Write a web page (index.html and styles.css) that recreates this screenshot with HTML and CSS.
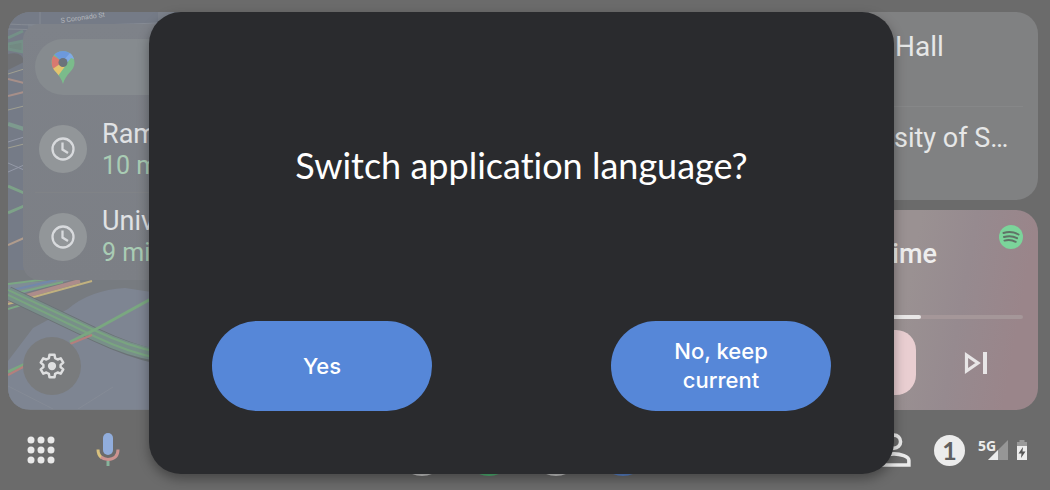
FILE: index.html
```html
<!DOCTYPE html>
<html lang="en">
<head>
<meta charset="utf-8">
<title>Switch application language</title>
<link rel="stylesheet" href="styles.css">
</head>
<body>
<div class="screen">
  <main class="cards">
    <section class="map-card">
      <svg class="map-art" viewBox="0 0 150 397" fill="none" aria-hidden="true">
        <path d="M0 0H150V12H20V270H0Z" fill="#757b87"/>
        <path d="M0 258H150V397H0Z" fill="#777b80"/>
        <path d="M25 316L60 297Q82 278 117 276L150 281V397H0V349Z" fill="#7e8592"/>
        <path d="M0 12Q50 15 150 11M0 17L150 21M32 0V12" stroke="#868b94" stroke-width="1"/>
        <path d="M0 26L15 19M0 32L15 29V40L0 37Z" stroke="#749087" fill="#728982" stroke-width="3"/>
        <path d="M0 42Q15 39 16 50L0 58Z" fill="#6f7175"/>
        <path d="M0 62L16 57M0 98L16 94M0 136L16 132" stroke="#a1a091"/>
        <path d="M0 67L16 71M0 84L16 80" stroke="#a68f89" stroke-width="2"/>
        <path d="M0 112L16 117" stroke="#7d9a8e" stroke-width="4"/>
        <path d="M0 130L16 125M0 160L16 153M0 151L16 158" stroke="#9499a7" stroke-width="1"/>
        <path d="M0 174L16 181M0 201L16 194" stroke="#7da288" stroke-width="3"/>
        <path d="M0 233L16 226" stroke="#b09c8d" stroke-width="2"/>
        <path d="M0 272L70 266L20 280L0 287Z" fill="#7f8c96"/>
        <path d="M0 272L40 267M0 283L55 270M0 297L20 291" stroke="#7ba783" stroke-width="2"/>
        <path d="M0 279L48 268" stroke="#7288aa" stroke-width="2"/>
        <path d="M0 289L72 269" stroke="#ac8c8b" stroke-width="4"/>
        <path d="M0 292L84 269" stroke="#c1b17f" stroke-width="2"/>
        <path d="M0 281L88 323Q122 339 150 345" stroke="#6b7276" stroke-width="14"/>
        <path d="M0 281L88 323Q122 339 150 343" stroke="#788f89" stroke-width="12"/>
        <path d="M0 278L88 319Q122 335 150 340M0 283L88 325Q122 341 150 346" stroke="#79a480" stroke-width="2"/>
        <path d="M62 330L92 315L150 283M0 360L17 352" stroke="#7aa780" stroke-width="3"/>
        <path d="M62 332L84 323M0 363L17 354" stroke="#b47f7c" stroke-width="2"/>
        <path d="M0 374L45 397M70 397L105 375" stroke="#858b96"/>
        <text class="street" x="53" y="11" transform="rotate(-8 53 11)">S Coronado St</text>
      </svg>
      <div class="places">
        <div class="search">
          <svg width="24" height="33" viewBox="0 0 24 33" aria-label="Maps">
            <defs><clipPath id="pin"><path d="M12 0C5 0 .5 5 .5 11.500C.5 20 9 22 12 33C15 22 23.500 20 23.500 11.500C23.500 5 19 0 12 0Z"/></clipPath></defs>
            <g clip-path="url(#pin)">
              <path d="M0 0H24V33H0Z" fill="#7bbb8b"/>
              <path d="M0 3L12 11L1 22Z" fill="#d87970"/>
              <path d="M12 11L15 14L7 25L0 19Z" fill="#e3c36e"/>
              <path d="M3 3Q11 -5 21 2L12 12Z" fill="#6d99dc"/>
              <path d="M19 2L25 4V9L20 7L15 13L12 10Z" fill="#80a9e5"/>
            </g>
            <circle cx="12" cy="11.500" r="4.500" fill="#6b737b"/>
          </svg>
        </div>
        <div class="place">
          <span class="clock"><svg width="26" height="26" viewBox="0 0 26 26" fill="none" stroke="#d8dadd" stroke-width="2.300"><circle cx="13" cy="13" r="10.500"/><path d="M12.500 6.500V13.500L18 17"/></svg></span>
          <div><p>Ram</p><p class="eta">10 m</p></div>
        </div>
        <div class="place">
          <span class="clock"><svg width="26" height="26" viewBox="0 0 26 26" fill="none" stroke="#d8dadd" stroke-width="2.300"><circle cx="13" cy="13" r="10.500"/><path d="M12.500 6.500V13.500L18 17"/></svg></span>
          <div><p>Univ</p><p class="eta">9 mi</p></div>
        </div>
      </div>
      <button class="settings" aria-label="Settings">
        <svg width="30" height="30" viewBox="0 0 24 24"><path d="M10 3h4l.5 2.700 2 1.100 2.500-.9 2 3.400-2.100 1.800v1.800l2.100 1.800-2 3.400-2.500-.9-2 1.100L14 21h-4l-.5-2.700-2-1.100-2.500.9-2-3.400 2.100-1.800v-1.800L3 9.300l2-3.400 2.500.9 2-1.100Z" fill="none" stroke="#dedfe0" stroke-width="2" stroke-linejoin="round"/><circle cx="12" cy="12" r="3.300" fill="#dedfe0"/></svg>
      </button>
    </section>
    <div class="side">
      <section class="list-card">
        <p class="entry">Hall</p>
        <p class="entry">sity of S…</p>
      </section>
      <section class="media-card">
        <div class="track">
          <h2>ime</h2>
          <svg width="24" height="24" viewBox="0 0 24 24" aria-label="Spotify"><circle cx="12" cy="12" r="12" fill="#7bd49a"/><path d="M4.500 8Q12.500 5.500 19.500 9.500M5 12Q12 9.800 18 13.200M5.500 15.600Q11.500 14 16.700 16.800" fill="none" stroke="#607267" stroke-width="2" stroke-linecap="round"/></svg>
        </div>
        <div class="progress"><div class="played"></div></div>
        <div class="controls">
          <button class="play" aria-label="Pause"></button>
          <button class="next" aria-label="Next"><svg width="24" height="24" viewBox="0 0 24 24"><path d="M2.500 4L14 12L2.500 20Z" fill="none" stroke="#e8e6e7" stroke-width="3.200"/><path d="M19 1H23V23H19Z" fill="#e8e6e7"/></svg></button>
        </div>
      </section>
    </div>
  </main>
  <nav class="dock">
    <button aria-label="Apps"><svg width="28" height="28" viewBox="0 0 28 28" fill="#e9e9e9"><circle cx="4" cy="4" r="3.500"/><circle cx="14" cy="4" r="3.500"/><circle cx="24" cy="4" r="3.500"/><circle cx="4" cy="14" r="3.500"/><circle cx="14" cy="14" r="3.500"/><circle cx="24" cy="14" r="3.500"/><circle cx="4" cy="24" r="3.500"/><circle cx="14" cy="24" r="3.500"/><circle cx="24" cy="24" r="3.500"/></svg></button>
    <button aria-label="Assistant"><svg width="24" height="34" viewBox="0 0 24 34" fill="none"><rect x="7" y="0" width="10" height="22" rx="5" fill="#91addc"/><path d="M2 16.500Q2 22 5.500 24.500" stroke="#d9c17e" stroke-width="3"/><path d="M5 24Q8 26.500 12 26.500Q22 26 22 16.500" stroke="#cc9390" stroke-width="3"/><path d="M12 28V33" stroke="#87b39b" stroke-width="3"/></svg></button>
    <div class="apps">
      <span class="app"></span><span class="app green"></span><span class="app"></span><span class="app blue"></span>
    </div>
    <div class="status">
      <svg width="50" height="50" viewBox="0 0 24 24" fill="none" stroke="#ececec" stroke-width="1.700"><circle cx="12" cy="8" r="3.150"/><path d="M4.850 19.150V17C4.850 15 9 13.850 12 13.850S19.150 15 19.150 17V19.150Z"/></svg>
      <span class="count">1</span>
      <div class="network">
        <span>5G</span>
        <svg width="20" height="20" viewBox="0 0 20 20"><path d="M20 0V20H0L10 10Z" fill="#969696"/><path d="M10 10V20H0Z" fill="#ececec"/></svg>
      </div>
      <svg class="battery" width="12" height="20" viewBox="0 0 12 20"><path d="M3.500 0H8.500V2H11V6H1V2H3.500Z" fill="#999"/><path d="M1 6H11V20H1Z" fill="#ececec"/><path d="M7 7L2.500 13.500H5.500L5 18L9.500 11.500H6.500Z" fill="#555"/></svg>
    </div>
  </nav>
  <div class="overlay">
    <div class="dialog" role="dialog" aria-labelledby="question">
      <h1 id="question">Switch application language?</h1>
      <div class="actions">
        <button>Yes</button>
        <button>No, keep current</button>
      </div>
    </div>
  </div>
</div>
</body>
</html>
```
FILE: styles.css
```css
* { box-sizing: border-box; }
body { margin: 0; background: #6b6b6b; color: #e0e2e4; font-family: Roboto, sans-serif; }
h1, h2, p { margin: 0; }
button { border: 0; padding: 0; background: none; color: inherit; font: inherit; }
svg { display: block; flex: none; }

.screen { position: relative; min-height: 100vh; display: flex; flex-direction: column; overflow: hidden; }
.cards { flex: 1; display: grid; grid-template-columns: 1fr 398px; gap: 10px; padding: 12px 12px 0 8px; }

.map-card { position: relative; border-radius: 22px; overflow: hidden; background: #7c828c; padding: 12px 15px 15px; display: flex; flex-direction: column; justify-content: space-between; align-items: flex-start; }
.map-art { position: absolute; top: 0; left: 0; width: 150px; }
.street { font-size: 7px; fill: #b4b7bc; }
.places { position: relative; width: 100%; border-radius: 16px; background: linear-gradient(#7e8289, #7c7f85); padding: 15px 12px 0; }
.search { height: 56px; border-radius: 28px; background: #868b8f; display: flex; align-items: center; padding-left: 16px; }
.place { display: flex; align-items: center; gap: 15px; height: 87px; padding: 0 4px; font-size: 27px; line-height: 32px; }
.place p { padding-top: 1px; }
.place:nth-child(2) { margin-top: 11px; border-bottom: 1px solid #808387; }
.place .eta { color: #a9ccb4; font-size: 25px; padding: 0; }
.clock { width: 48px; height: 48px; border-radius: 50%; background: #929699; display: grid; place-items: center; }
.settings { position: relative; width: 58px; height: 58px; border-radius: 50%; background: #797b7d; display: grid; place-items: center; }

.side { display: grid; grid-template-rows: 188px 1fr; gap: 10px; }
.list-card { border-radius: 22px; background: #808182; padding: 0 15px; }
.entry { height: 94px; padding: 17px 0 0 240px; font-size: 28px; line-height: 36px; color: #e6e7e7; white-space: nowrap; }
.entry + .entry { border-top: 1px solid #868788; padding: 13px 0 0 239px; font-size: 27px; }
.media-card { border-radius: 22px; background: linear-gradient(100deg, #9a9192 65%, #968a8f 78%, #9a858a 92%); padding: 15px; }
.track { display: flex; justify-content: space-between; padding-left: 237px; height: 90px; }
.track h2 { padding-top: 12px; font-size: 27px; line-height: 34px; font-weight: 500; color: #eee; }
.progress { height: 4px; border-radius: 2px; background: #a59799; }
.played { width: 266px; height: 4px; border-radius: 2px; background: #e9e7e7; }
.controls { display: flex; align-items: center; padding-top: 11px; padding-left: 180px; gap: 48px; }
.play { width: 81px; height: 65px; border-radius: 20px; background: #e9ced1; }

.dock { height: 80px; display: flex; align-items: center; padding: 0 22px 0 27px; }
.dock button { width: 28px; display: grid; place-items: center; margin-right: 39px; }
.apps { flex: 1; display: flex; gap: 15px; padding-left: 235px; }
.app { width: 52px; height: 52px; border-radius: 50%; background: #ccc; }
.green { background: #4fb574; }
.blue { background: #5a86d0; }
.status { display: flex; align-items: center; }
.count { width: 31px; height: 31px; margin: 0 13px 0 15px; border-radius: 50%; background: #ececec; color: #606060; font: bold 25px/31px Lato, sans-serif; text-align: center; }
.network { display: flex; align-items: flex-start; }
.network span { width: 10px; font: bold 14px/11px "Open Sans", sans-serif; color: #ececec; }
.battery { margin-left: 8px; }

.overlay { position: absolute; inset: 0; display: flex; padding: 12px 156px 16px 149px; }
.dialog { flex: 1; display: flex; flex-direction: column; justify-content: space-between; border-radius: 32px; background: #2a2b2e; padding: 129px 63px 63px; box-shadow: 0 5px 12px rgba(0, 0, 0, .35); color: #fff; }
.dialog h1 { font: 400 36px/48px Lato, sans-serif; font-variant-ligatures: none; text-align: center; }
.actions { display: flex; justify-content: space-between; }
.actions button { width: 220px; height: 90px; padding: 0 48px; border-radius: 45px; background: #5687d8; font: 500 22px/29px Inter, sans-serif; }
```
